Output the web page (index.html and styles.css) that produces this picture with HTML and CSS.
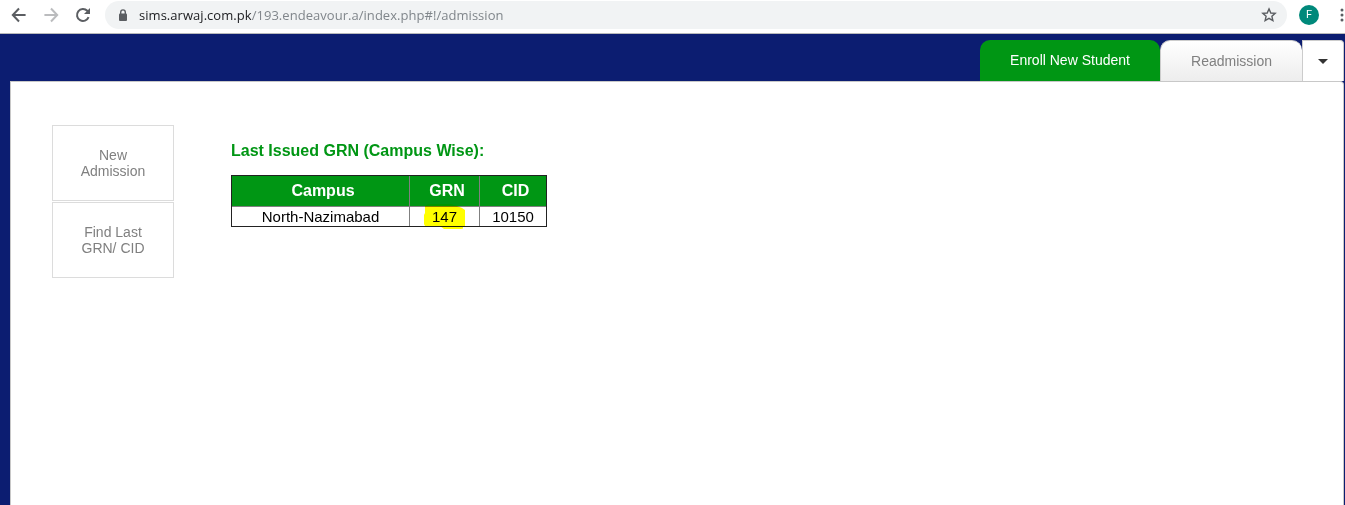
FILE: index.html
```html
<!DOCTYPE html>
<html lang="en">
<head>
<meta charset="utf-8">
<title>Admission</title>
<link rel="stylesheet" href="styles.css">
</head>
<body>
<header class="toolbar">
  <svg class="nav-icon back" width="16" height="16" viewBox="0 0 16 16"><path d="M14.6 8H2M8 1.5 1.8 8 8 14.5"/></svg>
  <svg class="nav-icon forward" width="16" height="16" viewBox="0 0 16 16"><path d="M1.4 8H14M8 1.5 14.2 8 8 14.5"/></svg>
  <svg class="nav-icon reload" width="16" height="16" viewBox="0 0 16 16"><path d="M13.6 10.2A6 6 0 1 1 12.3 3.8L13.4 5"/><path class="solid" d="M15 1v6H9z"/></svg>
  <div class="address">
    <svg class="lock" width="10" height="13" viewBox="0 0 10 13"><rect x="1" y="4.4" width="8" height="7.6" rx="1"/><path d="M2.7 5V3.2a2.3 2.3 0 0 1 4.6 0V5"/></svg>
    <span class="url"><span class="host">sims.arwaj.com.pk</span>/193.endeavour.a/index.php#!/admission</span>
    <svg class="star" width="16" height="16" viewBox="0 0 16 16"><path d="M8 1.9 9.8 6l4.4.4-3.3 2.9 1 4.3L8 11.3l-3.9 2.3 1-4.3L1.8 6.4 6.2 6z"/></svg>
  </div>
  <span class="avatar">F</span>
  <svg class="more" width="6" height="16" viewBox="0 0 6 16"><circle cx="3" cy="3" r="1.5"/><circle cx="3" cy="8" r="1.5"/><circle cx="3" cy="13" r="1.5"/></svg>
</header>
<div class="page">
  <nav class="tabs">
    <a class="tab active">Enroll New Student</a>
    <a class="tab">Readmission</a>
    <a class="tab-menu"><svg width="10" height="5" viewBox="0 0 10 5"><path d="M0 0h10L5 5z"/></svg></a>
  </nav>
  <main class="panel">
    <aside class="side">
      <a class="side-item">New<br>Admission</a>
      <a class="side-item">Find Last<br>GRN/ CID</a>
    </aside>
    <section class="content">
      <h1 class="title">Last Issued GRN (Campus Wise):</h1>
      <div class="grid">
        <div class="head shift">Campus</div><div class="head shift">GRN</div><div class="head shift">CID</div>
        <div class="cell">North-Nazimabad</div>
        <div class="cell">147<svg class="marker" width="42" height="27" viewBox="0 0 42 27"><path d="M1 3 4 1h23l6 2 5 2 3 2v17h-2v1.500l-2 .5H20l-2-1.500-2-1.500H1L0 21v-9l1-2z"/></svg></div>
        <div class="cell">10150</div>
      </div>
    </section>
  </main>
</div>
</body>
</html>
```
FILE: styles.css
```css
* { box-sizing: border-box; }
body {
  margin: 0;
  height: 505px;
  overflow: hidden;
  display: flex;
  flex-direction: column;
  background: #fff;
  font-family: "Liberation Sans", Arial, sans-serif;
}
.toolbar {
  height: 34px;
  flex: none;
  display: flex;
  align-items: center;
  padding: 0 0 3px 11px;
  border-bottom: 1px solid #b9babb;
  overflow: hidden;
}
.nav-icon { flex: none; margin-right: 16px; fill: none; stroke: #5b5e62; stroke-width: 2; }
.forward { stroke: #bbbcbe; }
.reload { margin-right: 14px; }
.solid { fill: #5b5e62; stroke: none; }
.address {
  width: 1182px;
  height: 28px;
  flex: none;
  display: flex;
  align-items: center;
  padding: 0 10px 0 13px;
  border-radius: 14px;
  background: #f1f3f4;
}
.lock { margin-right: 11px; fill: #5b5e62; }
.lock path { fill: none; stroke: #5b5e62; stroke-width: 1.4; }
.url {
  font: 13px "Open Sans", "Noto Sans", sans-serif;
  letter-spacing: 0.04px;
  color: #80868b;
  white-space: nowrap;
}
.host { color: #202124; }
.star { margin-left: auto; fill: none; stroke: #5b5e62; stroke-width: 1.4; }
.avatar {
  width: 20px;
  height: 20px;
  flex: none;
  margin-left: 12px;
  border-radius: 50%;
  background: #00897b;
  color: #fff;
  font: 11px/20px Roboto, sans-serif;
  text-align: center;
}
.more { flex: none; margin-left: 20px; fill: #5b5e62; }
.page {
  flex: 1;
  min-height: 0;
  display: flex;
  flex-direction: column;
  padding: 6px 1px 0 10px;
  background: #0c1d71;
}
.tabs { height: 41px; flex: none; display: flex; justify-content: flex-end; }
.tab {
  width: 142px;
  border: 1px solid #ccc;
  border-width: 1px 0 0 1px;
  border-radius: 10px 10px 0 0;
  background: linear-gradient(#fff, #ededed);
  color: #808080;
  font-size: 14px;
  line-height: 41px;
  text-align: center;
}
.tab.active { width: 180px; border: 0; background: #009614; color: #fff; }
.tab-menu {
  width: 42px;
  display: flex;
  align-items: center;
  justify-content: center;
  border: 1px solid #ccc;
  border-bottom: 0;
  border-radius: 0 4px 0 0;
  background: #fff;
  fill: #333;
}
.panel {
  flex: 1;
  display: flex;
  align-items: flex-start;
  padding: 43px 0 0 41px;
  border: 1px solid #c8c8c8;
  border-bottom: 0;
  border-radius: 0 4px 0 0;
  background: #fff;
}
.side { width: 122px; display: flex; flex-direction: column; gap: 1px; }
.side-item {
  height: 76px;
  padding-top: 21px;
  border: 1px solid #dcdcdc;
  color: #808080;
  font-size: 14px;
  line-height: 16px;
  text-align: center;
}
.content { margin-left: 57px; padding-top: 17px; }
.title { margin: 0 0 15px; color: #009614; font-size: 16px; line-height: 18px; }
.grid {
  width: 316px;
  display: grid;
  grid-template: 31px 19px / 178px 70px 66px;
  border: 1px solid #222;
}
.head, .cell { border-right: 1px solid #808080; text-align: center; }
.head:nth-child(3n), .cell:nth-child(3n) { border-right: 0; }
.head {
  border-bottom: 1px solid #808080;
  background: #009614;
  color: #fff;
  font-size: 16px;
  font-weight: bold;
  line-height: 30px;
}
.shift { padding-left: 5px; }
.cell { position: relative; color: #000; font-size: 15px; line-height: 19px; }
.marker { position: absolute; left: 14px; top: -4px; fill: #ff0; mix-blend-mode: multiply; }
```
